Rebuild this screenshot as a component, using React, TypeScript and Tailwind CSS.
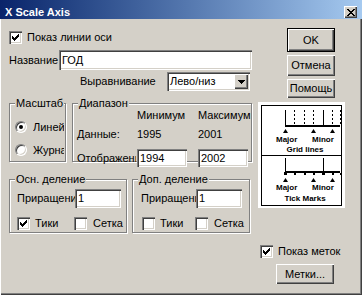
import React from 'react'

const sunken =
  'shadow-[inset_1px_1px_0_#808080,inset_2px_2px_0_#404040,inset_-1px_-1px_0_#fff,inset_-2px_-2px_0_#d4d0c8]'
const raised = 'shadow-[inset_1px_1px_0_#fff,inset_-1px_-1px_0_#404040,inset_-2px_-2px_0_#808080]'

function Check({ checked }: { checked?: boolean }) {
  return (
    <span className={`w-[13px] h-[13px] shrink-0 bg-white flex items-center justify-center ${sunken}`}>
      {checked && (
        <svg width="7" height="7" viewBox="0 0 7 7" shapeRendering="crispEdges">
          <path
            fill="#000"
            d="M6 0h1v1h-1z M5 1h2v1h-2z M0 2h1v1h-1z M4 2h3v1h-3z M0 3h2v1h-2z M3 3h3v1h-3z M0 4h5v1h-5z M1 5h3v1h-3z M2 6h1v1h-1z"
          />
        </svg>
      )}
    </span>
  )
}

function Radio({ checked }: { checked?: boolean }) {
  return (
    <span className="w-[12px] h-[12px] shrink-0 rounded-full bg-white border border-t-[#808080] border-l-[#808080] border-b-white border-r-white flex items-center justify-center shadow-[inset_1px_1px_0_#404040,inset_-1px_-1px_0_#d4d0c8]">
      {checked && <span className="w-[4px] h-[4px] rounded-full bg-black" />}
    </span>
  )
}

function Edit({ value, className }: { value: string; className: string }) {
  return (
    <div className={`bg-white flex items-center pl-[3px] shrink-0 ${sunken} ${className}`}>
      <span className="leading-none">{value}</span>
    </div>
  )
}

function Button({ label, className, def }: { label: string; className: string; def?: boolean }) {
  if (def) {
    return (
      <div className={`border border-black ${className}`}>
        <div className={`w-full h-full flex items-center justify-center ${raised}`}>{label}</div>
      </div>
    )
  }
  return <div className={`flex items-center justify-center ${raised} ${className}`}>{label}</div>
}

function Group({ label, className, children }: { label: string; className: string; children?: React.ReactNode }) {
  return (
    <div className={`relative shrink-0 ${className}`}>
      <div className="absolute left-0 right-[1px] top-[6px] bottom-[1px] border border-[#808080] shadow-[inset_1px_1px_0_#fff,1px_1px_0_#fff]" />
      <div className="relative ml-[6px] px-[1px] w-fit h-[13px] leading-[13px] bg-[#d4d0c8] whitespace-nowrap">{label}</div>
      <div className="relative">{children}</div>
    </div>
  )
}

function Preview() {
  const dashed = [36, 46, 55, 74, 82]
  return (
    <svg width="87" height="106" viewBox="0 0 87 106" shapeRendering="crispEdges">
      <rect x="0" y="0" width="87" height="106" fill="#fff" />
      <rect x="3.5" y="3.5" width="80" height="100" fill="none" stroke="#000" />
      <line x1="3" y1="53.5" x2="84" y2="53.5" stroke="#000" />
      {/* grid lines */}
      <line x1="27.5" y1="8" x2="27.5" y2="24" stroke="#000" />
      <line x1="65.5" y1="8" x2="65.5" y2="24" stroke="#000" />
      {dashed.map((x) => (
        <line key={x} x1={x + 0.5} y1="8" x2={x + 0.5} y2="24" stroke="#000" strokeDasharray="2 2" />
      ))}
      <rect x="27" y="23" width="55" height="2" fill="#000" />
      {[27, 55, 74].map((x) => (
        <path key={x} d={`M${x - 2} 31h5l-2.5 -4z`} fill="#000" shapeRendering="auto" />
      ))}
      <g fontFamily="'Liberation Sans', Arial, sans-serif" fontWeight="bold" fontSize="8" fill="#000" shapeRendering="auto">
        <text x="18" y="40">Major</text>
        <text x="54" y="40">Minor</text>
        <text x="47" y="50" textAnchor="middle">Grid lines</text>
        <text x="18" y="88">Major</text>
        <text x="54" y="88">Minor</text>
        <text x="47" y="99" textAnchor="middle">Tick Marks</text>
      </g>
      {/* tick marks */}
      <line x1="27.5" y1="56" x2="27.5" y2="70" stroke="#000" />
      <line x1="65.5" y1="56" x2="65.5" y2="70" stroke="#000" />
      <rect x="27" y="69" width="55" height="2" fill="#000" />
      {dashed.map((x) => (
        <rect key={x} x={x} y="71" width="2" height="2" fill="#000" />
      ))}
      <rect x="26" y="70" width="3" height="3" fill="#000" />
      <rect x="64" y="70" width="3" height="3" fill="#000" />
      {[27, 55, 74].map((x) => (
        <path key={x} d={`M${x - 2} 80h5l-2.5 -4z`} fill="#000" shapeRendering="auto" />
      ))}
    </svg>
  )
}

export default function App() {
  return (
    <div className="w-[362px] h-[295px] bg-[#d4d0c8] flex flex-col overflow-hidden text-[11px] text-black font-['Liberation_Sans',Arial,sans-serif] shadow-[inset_1px_0_0_#fff,inset_-1px_-1px_0_#404040,inset_-2px_-2px_0_#808080]">
      {/* title bar */}
      <div className="h-[19px] shrink-0 pt-[5px] pl-[5px] pr-[5px] flex items-center bg-linear-to-r from-[#0a246a] to-[#a6caf0]">
        <span className="text-white font-bold leading-none">X Scale Axis</span>
        <div className={`ml-auto w-[13px] h-[12px] bg-[#d4d0c8] flex items-center justify-center ${raised}`}>
          <svg width="8" height="7" viewBox="0 0 8 7" shapeRendering="crispEdges">
            <path
              fill="#000"
              d="M0 0h2v1h-2z M6 0h2v1h-2z M1 1h2v1h-2z M5 1h2v1h-2z M2 2h4v1h-4z M3 3h2v1h-2z M2 4h4v1h-4z M1 5h2v1h-2z M5 5h2v1h-2z M0 6h2v1h-2z M6 6h2v1h-2z"
            />
          </svg>
        </div>
      </div>

      <div className="flex pl-[9px]">
        {/* left column */}
        <div className="w-[244px] flex flex-col">
          <div className="mt-[12px] h-[13px] flex items-center gap-[5px]">
            <Check checked />
            <span>Показ линии оси</span>
          </div>

          <div className="mt-[6px] h-[20px] flex items-center">
            <span className="w-[50px] overflow-hidden whitespace-nowrap">Название</span>
            <Edit value="ГОД" className="w-[193px] h-[20px]" />
          </div>

          <div className="mt-[2px] h-[19px] flex items-center pl-[71px]">
            <span className="w-[87px]">Выравнивание</span>
            <div className={`w-[83px] h-[19px] bg-white flex items-center pl-[3px] pr-[2px] ${sunken}`}>
              <span className="flex-1">Лево/низ</span>
              <div className={`w-[14px] h-[15px] bg-[#d4d0c8] flex items-center justify-center ${raised}`}>
                <svg width="7" height="4" viewBox="0 0 7 4" shapeRendering="crispEdges">
                  <path fill="#000" d="M0 0h7v1h-7z M1 1h5v1h-5z M2 2h3v1h-3z M3 3h1v1h-1z" />
                </svg>
              </div>
            </div>
          </div>

          <div className="mt-[6px] flex gap-[5px]">
            <Group label="Масштаб" className="w-[58px] h-[66px]">
              <div className="mt-[9px] pl-[6px] flex items-center gap-[6px]">
                <Radio checked />
                <span className="w-[31px] overflow-hidden whitespace-nowrap">Линейный</span>
              </div>
              <div className="mt-[6px] pl-[6px] flex items-center gap-[6px]">
                <Radio />
                <span className="w-[31px] overflow-hidden whitespace-nowrap">Журнальный</span>
              </div>
            </Group>

            <Group label="Диапазон" className="w-[181px] h-[66px]">
              <div className="-mt-[3px] pl-[5px] grid grid-cols-[60px_61px_54px] items-center">
                <span className="h-[13px]" />
                <span className="w-[52px] overflow-hidden whitespace-nowrap">Минимум</span>
                <span className="w-[53px] overflow-hidden whitespace-nowrap">Максимум</span>

                <span className="mt-[2px]">Данные:</span>
                <span className="mt-[2px]">1995</span>
                <span className="mt-[2px]">2001</span>

                <span className="mt-[7px] w-[59px] overflow-hidden whitespace-nowrap">Отображение</span>
                <Edit value="1994" className="mt-[7px] w-[50px] h-[18px]" />
                <Edit value="2002" className="mt-[7px] w-[50px] h-[18px]" />
              </div>
            </Group>
          </div>

          <div className="mt-[10px] flex gap-[4px]">
            <Group label="Осн. деление" className="w-[119px] h-[61px]">
              <div className="mt-[3px] pl-[8px] flex items-center">
                <span className="w-[58px] overflow-hidden whitespace-nowrap">Приращение</span>
                <Edit value="1" className="w-[46px] h-[19px]" />
              </div>
              <div className="mt-[7px] pl-[8px] flex items-center">
                <div className="w-[57px] flex items-center gap-[5px]">
                  <Check checked />
                  <span>Тики</span>
                </div>
                <div className="flex items-center gap-[6px]">
                  <Check />
                  <span>Сетка</span>
                </div>
              </div>
            </Group>

            <Group label="Доп. деление" className="w-[119px] h-[61px]">
              <div className="mt-[3px] pl-[9px] flex items-center">
                <span className="w-[55px] overflow-hidden whitespace-nowrap">Приращение</span>
                <Edit value="1" className="w-[46px] h-[19px]" />
              </div>
              <div className="mt-[7px] pl-[10px] flex items-center">
                <div className="w-[53px] flex items-center gap-[5px]">
                  <Check />
                  <span>Тики</span>
                </div>
                <div className="flex items-center gap-[6px]">
                  <Check />
                  <span>Сетка</span>
                </div>
              </div>
            </Group>
          </div>
        </div>

        {/* right column */}
        <div className="ml-[5px] w-[87px] flex flex-col">
          <Button def label="OK" className="mt-[9px] ml-[29px] w-[48px] h-[24px]" />
          <Button label="Отмена" className="mt-[3px] ml-[29px] w-[48px] h-[21px]" />
          <Button label="Помощь" className="mt-[3px] ml-[29px] w-[48px] h-[19px]" />
          <div className="mt-[4px]">
            <Preview />
          </div>
          <div className="mt-[37px] ml-[2px] h-[13px] flex items-center gap-[5px]">
            <Check checked />
            <span className="whitespace-nowrap">Показ меток</span>
          </div>
          <Button label="Метки..." className="mt-[6px] ml-[18px] w-[58px] h-[20px]" />
        </div>
      </div>
    </div>
  )
}
